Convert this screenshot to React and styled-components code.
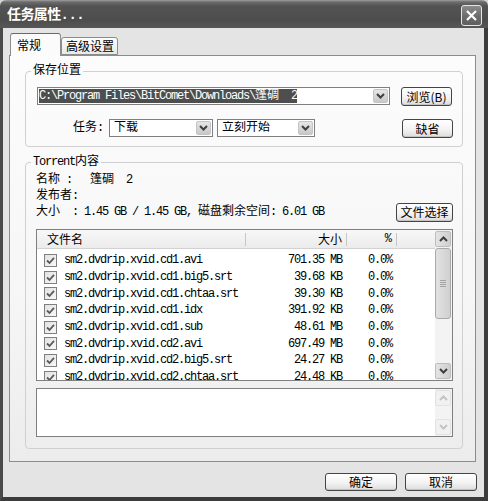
import styled, { createGlobalStyle } from 'styled-components';

const GlobalStyle = createGlobalStyle`
  html, body {
    margin: 0;
    padding: 0;
    background: #d6d6d6;
  }
  body {
    font-family: "Liberation Mono", "Noto Sans CJK SC", monospace;
    font-size: 12px;
    letter-spacing: -1.2px;
    color: #000;
  }
`;

const Frame = styled.div`
  width: 488px;
  height: 501px;
  display: flex;
  flex-direction: column;
  overflow: hidden;
`;

const TitleBar = styled.div`
  flex: none;
  height: 28px;
  display: flex;
  align-items: center;
  justify-content: space-between;
  padding: 0 6px 0 7px;
  border-radius: 6px 6px 0 0;
  background: linear-gradient(#a0a0a0 0, #6c6c6c 2px, #535353 6px, #4d4d4d 20px, #575757 28px);
`;

const Title = styled.div`
  color: #fff;
  font-size: 14px;
  font-weight: bold;
  letter-spacing: -0.6px;
  line-height: 16px;
  padding-top: 1px;
`;

const CloseButton = styled.div`
  width: 21px;
  height: 21px;
  box-sizing: border-box;
  margin-top: 2px;
  border: 1px solid #e6e6e6;
  border-radius: 3px;
  background: linear-gradient(#8a8a8a, #6a6a6a 60%, #5e5e5e);
  display: flex;
  align-items: center;
  justify-content: center;
`;

const Body = styled.div`
  flex: 1;
  display: flex;
  flex-direction: column;
  background: #e4e4e4;
  border-left: 3px solid #4a4a4a;
  border-right: 4px solid #3c3c3c;
  border-bottom: 4px solid #3c3c3c;
  padding: 5px 8px 0 6px;
`;

const TabRow = styled.div`
  display: flex;
  align-items: flex-end;
  height: 22px;
  padding-left: 1px;
  position: relative;
  z-index: 1;
`;

const Tab = styled.div`
  box-sizing: border-box;
  width: ${(p) => p.$w}px;
  height: ${(p) => (p.$active ? 23 : 18)}px;
  margin-bottom: ${(p) => (p.$active ? -1 : 0)}px;
  padding-left: ${(p) => (p.$active ? 6 : 4)}px;
  border: 1px solid #8c8c8c;
  border-bottom: ${(p) => (p.$active ? 'none' : '1px solid #8c8c8c')};
  border-top-color: ${(p) => (p.$active ? '#6a6a6a' : '#8c8c8c')};
  border-radius: 3px 3px 0 0;
  background: ${(p) => (p.$active ? '#fbfbfb' : 'linear-gradient(#fefefe, #e8e8e8)')};
  font-family: "Noto Sans CJK SC", sans-serif;
  letter-spacing: 0;
  line-height: ${(p) => (p.$active ? 22 : 16)}px;
`;

const Panel = styled.div`
  box-sizing: border-box;
  height: 407px;
  border: 1px solid #8c8c8c;
  background: linear-gradient(#fcfcfc, #f6f6f6 60%, #ececec);
  padding: 8px 12px 0 15px;
  display: flex;
  flex-direction: column;
  gap: 8px;
`;

const Group = styled.fieldset`
  margin: 0;
  padding: 0;
  min-width: 0;
  border: 1px solid #d0d0d0;
  border-radius: 4px;
`;

const Legend = styled.legend`
  margin-left: 5px;
  padding: 0 2px;
  line-height: 14px;
`;

const GroupInner = styled.div`
  padding: ${(p) => p.$pad};
  display: flex;
  flex-direction: column;
`;

const FormRow = styled.div`
  display: flex;
  align-items: flex-start;
  margin-top: ${(p) => p.$top || 0}px;
`;

const Label = styled.div`
  margin: 1px 6px 0 36px;
  line-height: 16px;
`;

const Combo = styled.div`
  box-sizing: border-box;
  width: ${(p) => p.$w}px;
  height: 18px;
  margin-right: ${(p) => p.$gap || 0}px;
  border: 1px solid #7f7f7f;
  background: #fff;
  padding: 1px;
  display: flex;
  align-items: stretch;
`;

const ComboText = styled.div`
  flex: 1;
  min-width: 0;
  padding-left: ${(p) => p.$pl || 0}px;
  line-height: 14px;
  white-space: pre;
  overflow: hidden;
`;

const Selected = styled.span`
  display: inline-block;
  background: #4e4e4e;
  color: #fff;
  line-height: 14px;
`;

const Drop = styled.div`
  box-sizing: border-box;
  width: 15px;
  border: 1px solid #c4c4c4;
  border-radius: 2px;
  background: linear-gradient(#e6e6e6, #c8c8c8);
  display: flex;
  align-items: center;
  justify-content: center;
`;

const Button = styled.button`
  box-sizing: border-box;
  width: ${(p) => p.$w}px;
  height: ${(p) => p.$h || 19}px;
  margin-left: ${(p) => (p.$push ? 'auto' : '0')};
  padding: 0;
  border: 1px solid #444;
  border-radius: 3px;
  background: linear-gradient(#ffffff, #f3f3f3 55%, #dcdcdc);
  box-shadow: inset 0 -1px 0 #c4c4c4;
  font-family: "Noto Sans CJK SC", sans-serif;
  font-size: 12px;
  letter-spacing: 0;
  line-height: 1;
  color: #000;
`;

const Zh = styled.span`
  letter-spacing: 0;
`;

const InfoLine = styled.div`
  height: 16px;
  line-height: 16px;
  white-space: pre;
  display: flex;
  align-items: center;
  justify-content: space-between;
`;

const ListBox = styled.div`
  box-sizing: border-box;
  height: ${(p) => p.$h}px;
  margin-top: ${(p) => p.$top}px;
  border: 1px solid #7f7f7f;
  background: #fff;
  display: flex;
  overflow: hidden;
`;

const ListMain = styled.div`
  flex: 1;
  min-width: 0;
  display: flex;
  flex-direction: column;
  overflow: hidden;
`;

const cols = '209px 101px 50px 1fr';

const Header = styled.div`
  flex: none;
  box-sizing: border-box;
  height: 19px;
  display: grid;
  grid-template-columns: ${cols};
  background: linear-gradient(#f8f8f8, #ebebeb);
  border-bottom: 1px solid #d2d2d2;
`;

const HeaderCell = styled.div`
  display: flex;
  align-items: center;
  justify-content: ${(p) => (p.$right ? 'flex-end' : 'flex-start')};
  padding: ${(p) => (p.$right ? '0 5px 0 0' : '0 0 0 10px')};
  letter-spacing: 0;
  background: ${(p) =>
    p.$last ? 'none' : 'linear-gradient(#c6c6c6, #c6c6c6) right center / 1px 13px no-repeat'};
`;

const Rows = styled.div`
  padding-top: 3px;
`;

const Row = styled.div`
  display: grid;
  grid-template-columns: ${cols};
  height: 16.7px;
  align-items: center;
  white-space: pre;
`;

const NameCell = styled.div`
  display: flex;
  align-items: center;
  gap: 7px;
  padding-left: 7px;
`;

const NumCell = styled.div`
  text-align: right;
  padding-right: 5px;
`;

const CheckBox = styled.div`
  flex: none;
  box-sizing: border-box;
  width: 13px;
  height: 13px;
  border: 1px solid #7f7f7f;
  background: linear-gradient(135deg, #e2e2e2, #f8f8f8);
  display: flex;
  align-items: center;
  justify-content: center;
`;

const ScrollBar = styled.div`
  flex: none;
  width: 17px;
  box-sizing: border-box;
  padding: 1px 1px 1px 0;
  background: #f3f3f3;
  display: flex;
  flex-direction: column;
`;

const ArrowButton = styled.div`
  flex: none;
  box-sizing: border-box;
  height: 16px;
  border: 1px solid ${(p) => (p.$off ? '#e2e2e2' : '#bdbdbd')};
  border-radius: 2px;
  background: ${(p) => (p.$off ? '#f1f1f1' : 'linear-gradient(90deg, #e4e4e4, #cfcfcf)')};
  display: flex;
  align-items: center;
  justify-content: center;
`;

const Thumb = styled.div`
  flex: none;
  box-sizing: border-box;
  height: 71px;
  margin-top: 1px;
  border: 1px solid #a9a9a9;
  border-radius: 3px;
  background: linear-gradient(90deg, #e2e2e2, #d0d0d0);
  display: flex;
  align-items: center;
  justify-content: center;
`;

const Grip = styled.div`
  width: 6px;
  height: 7px;
  background: repeating-linear-gradient(#a4a4a4 0 1px, transparent 1px 2px);
`;

const Track = styled.div`
  flex: 1;
`;

const Footer = styled.div`
  display: flex;
  justify-content: flex-end;
  gap: 8px;
  margin: 11px -1px 0 0;
`;

const Chevron = ({ up, color = '#3f3f3f' }) => (
  <svg width="9" height="6" viewBox="0 0 9 6">
    <path
      d={up ? 'M1 5 L4.5 1.5 L8 5' : 'M1 1 L4.5 4.5 L8 1'}
      fill="none"
      stroke={color}
      strokeWidth="2"
    />
  </svg>
);

const files = [
  ['sm2.dvdrip.xvid.cd1.avi', '701.35 MB'],
  ['sm2.dvdrip.xvid.cd1.big5.srt', '39.68 KB'],
  ['sm2.dvdrip.xvid.cd1.chtaa.srt', '39.30 KB'],
  ['sm2.dvdrip.xvid.cd1.idx', '391.92 KB'],
  ['sm2.dvdrip.xvid.cd1.sub', '48.61 MB'],
  ['sm2.dvdrip.xvid.cd2.avi', '697.49 MB'],
  ['sm2.dvdrip.xvid.cd2.big5.srt', '24.27 KB'],
  ['sm2.dvdrip.xvid.cd2.chtaa.srt', '24.48 KB'],
];

const App = () => (
  <>
    <GlobalStyle />
    <Frame>
      <TitleBar>
        <Title>任务属性...</Title>
        <CloseButton>
          <svg width="11" height="11" viewBox="0 0 11 11">
            <path d="M1 1 L10 10 M10 1 L1 10" stroke="#fff" strokeWidth="2.2" />
          </svg>
        </CloseButton>
      </TitleBar>

      <Body>
        <TabRow>
          <Tab $active $w={51}>常规</Tab>
          <Tab $w={57}>高级设置</Tab>
        </TabRow>

        <Panel>
          <Group>
            <Legend>
              <Zh>保存位置</Zh>
            </Legend>
            <GroupInner $pad="9px 9px 8px 11px">
              <FormRow>
                <Combo $w={353} $gap={11}>
                  <ComboText>
                    <Selected>
                      {'C:\\Program Files\\BitComet\\Downloads\\'}
                      <Zh>篷碉</Zh>
                      {'  2'}
                    </Selected>
                  </ComboText>
                  <Drop>
                    <Chevron />
                  </Drop>
                </Combo>
                <Button $w={51}>浏览(B)</Button>
              </FormRow>
              <FormRow $top={13}>
                <Label>
                  <Zh>任务</Zh>:
                </Label>
                <Combo $w={104} $gap={4}>
                  <ComboText $pl={3}>
                    <Zh>下载</Zh>
                  </ComboText>
                  <Drop>
                    <Chevron />
                  </Drop>
                </Combo>
                <Combo $w={98}>
                  <ComboText $pl={3}>
                    <Zh>立刻开始</Zh>
                  </ComboText>
                  <Drop>
                    <Chevron />
                  </Drop>
                </Combo>
                <Button $w={51} $push>
                  缺省
                </Button>
              </FormRow>
            </GroupInner>
          </Group>

          <Group>
            <Legend>
              Torrent<Zh>内容</Zh>
            </Legend>
            <GroupInner $pad="3px 9px 11px 10px">
              <InfoLine>
                <span>
                  <Zh>名称</Zh>
                  {' :   '}
                  <Zh>篷碉</Zh>
                  {'  2'}
                </span>
              </InfoLine>
              <InfoLine>
                <span>
                  <Zh>发布者</Zh>:
                </span>
              </InfoLine>
              <InfoLine>
                <span>
                  <Zh>大小</Zh>
                  {'  : 1.45 GB / 1.45 GB, '}
                  <Zh>磁盘剩余空间</Zh>
                  {': 6.01 GB'}
                </span>
                <Button $w={57}>文件选择</Button>
              </InfoLine>

              <ListBox $h={152} $top={9}>
                <ListMain>
                  <Header>
                    <HeaderCell>文件名</HeaderCell>
                    <HeaderCell $right>大小</HeaderCell>
                    <HeaderCell $right>%</HeaderCell>
                    <HeaderCell $last />
                  </Header>
                  <Rows>
                    {files.map(([name, size]) => (
                      <Row key={name}>
                        <NameCell>
                          <CheckBox>
                            <svg width="9" height="9" viewBox="0 0 9 9">
                              <path
                                d="M1 4.5 L3.5 7 L8 1.8"
                                fill="none"
                                stroke="#5a5a5a"
                                strokeWidth="1.8"
                              />
                            </svg>
                          </CheckBox>
                          {name}
                        </NameCell>
                        <NumCell>{size}</NumCell>
                        <NumCell>0.0%</NumCell>
                      </Row>
                    ))}
                  </Rows>
                </ListMain>
                <ScrollBar>
                  <ArrowButton>
                    <Chevron up />
                  </ArrowButton>
                  <Thumb>
                    <Grip />
                  </Thumb>
                  <Track />
                  <ArrowButton>
                    <Chevron />
                  </ArrowButton>
                </ScrollBar>
              </ListBox>

              <ListBox $h={49} $top={7}>
                <ListMain />
                <ScrollBar>
                  <ArrowButton $off>
                    <Chevron up color="#c4c4c4" />
                  </ArrowButton>
                  <Track />
                  <ArrowButton $off>
                    <Chevron color="#c4c4c4" />
                  </ArrowButton>
                </ScrollBar>
              </ListBox>
            </GroupInner>
          </Group>
        </Panel>

        <Footer>
          <Button $w={72} $h={18}>
            确定
          </Button>
          <Button $w={72} $h={18}>
            取消
          </Button>
        </Footer>
      </Body>
    </Frame>
  </>
);

export default App;
